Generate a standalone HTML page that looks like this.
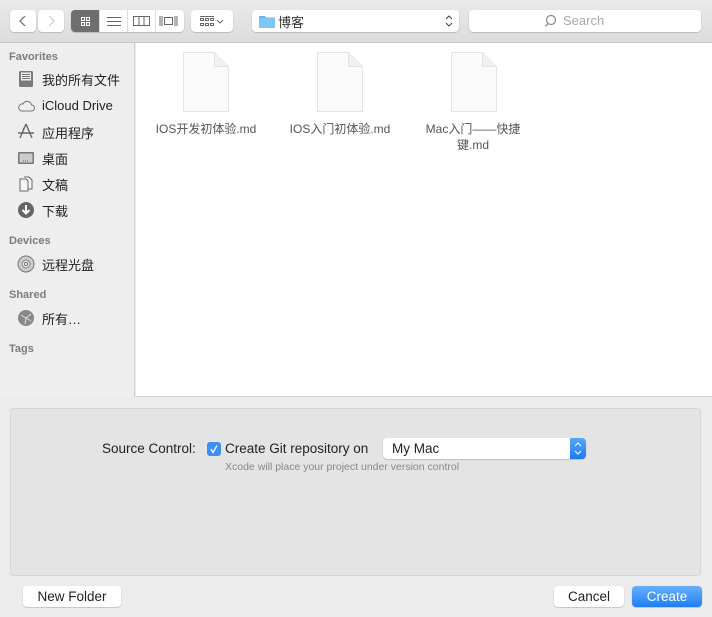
<!DOCTYPE html>
<html><head><meta charset="utf-8"><style>
*{box-sizing:border-box;margin:0;padding:0}
body{width:712px;height:617px;overflow:hidden;background:#ececec;font-family:"Liberation Sans","Noto Sans CJK SC",sans-serif;position:relative;font-size:13px;color:#222}
.abs{position:absolute}
.tb{left:0;top:0;width:712px;height:43px;background:linear-gradient(#eaeaea,#dcdcdc);border-bottom:1px solid #c8c8c8}
.btn{position:absolute;background:#fff;border-radius:4px;box-shadow:0 0.5px 1px rgba(0,0,0,.3);}
.side{left:0;top:43px;width:135px;height:354px;background:#eeeeee;border-right:1px solid #d0d0d0}
.main{left:136px;top:43px;width:576px;height:354px;background:#fff;border-bottom:1px solid #d4d4d4}
.hd{position:absolute;left:9px;font-size:11px;font-weight:bold;color:#7c7c7c}
.it{position:absolute;left:42px;font-size:13px;color:#222}
.ic{position:absolute;left:17px;width:18px;height:18px}
.file{position:absolute;width:46px;height:60px}
.fn{position:absolute;width:134px;text-align:center;font-size:12px;color:#555;line-height:16px}
</style></head><body>
<div class="abs tb"></div>
<div class="btn" style="left:10px;top:10px;width:26px;height:22px"><svg width="26" height="22"><path d="M15 6 L10 11 L15 16" stroke="#666" fill="none" stroke-width="1.2"/></svg></div>
<div class="btn" style="left:38px;top:10px;width:26px;height:22px"><svg width="26" height="22"><path d="M11 6 L16 11 L11 16" stroke="#ccc" fill="none" stroke-width="1.2"/></svg></div>
<div class="btn" style="left:71px;top:10px;width:113px;height:22px;overflow:hidden">
<div class="abs" style="left:0;top:0;width:28px;height:22px;background:#6e6e6e"></div>
<svg class="abs" style="left:0;top:0" width="113" height="22">
<g fill="none" stroke="#fff" stroke-width="1"><rect x="10.5" y="7.5" width="3" height="3"/><rect x="15.5" y="7.5" width="3" height="3"/><rect x="10.5" y="12.5" width="3" height="3"/><rect x="15.5" y="12.5" width="3" height="3"/></g>
<g stroke="#666" stroke-width="1"><path d="M36 7.5h14M36 11.5h14M36 15.5h14"/><line x1="28.5" y1="0" x2="28.5" y2="22" stroke="#ddd"/><line x1="56.5" y1="0" x2="56.5" y2="22" stroke="#ddd"/><line x1="84.5" y1="0" x2="84.5" y2="22" stroke="#ddd"/>
<rect x="62.5" y="6.5" width="16" height="9" fill="none"/><path d="M68 7v9M73 7v9"/>
<path d="M89 6v10M91 6v10M104 6v10M106 6v10" /><rect x="93.5" y="7.5" width="8" height="7" fill="none"/></g></svg></div>
<div class="btn" style="left:191px;top:10px;width:42px;height:22px"><svg width="42" height="22"><g fill="none" stroke="#666" stroke-width="1"><path d="M9 6.5h14"/><rect x="9.5" y="8.5" width="3" height="2"/><rect x="14.5" y="8.5" width="3" height="2"/><rect x="19.5" y="8.5" width="3" height="2"/><rect x="9.5" y="13.5" width="3" height="2"/><rect x="14.5" y="13.5" width="3" height="2"/><rect x="19.5" y="13.5" width="3" height="2"/><path d="M26 10l3 3 3-3"/></g></svg></div>
<div class="btn" style="left:252px;top:10px;width:207px;height:22px">
<svg class="abs" style="left:7px;top:4px" width="16" height="14"><path d="M0 2h6l1 1.5h9V14H0z" fill="#5eb6ec"/><rect x="0" y="4" width="16" height="10" fill="#7cc7f3"/></svg>
<span class="abs" style="left:26px;top:2px;font-size:13px;color:#333">博客</span>
<svg class="abs" style="left:193px;top:4px" width="8" height="14"><path d="M1 5l3-3 3 3M1 9l3 3 3-3" stroke="#444" fill="none"/></svg></div>
<div class="btn" style="left:469px;top:10px;width:232px;height:22px">
<svg class="abs" style="left:76px;top:4px" width="14" height="14"><circle cx="6" cy="6" r="4.5" stroke="#888" fill="none" stroke-width="1.2"/><path d="M3 9.5L0.5 12.5" stroke="#888" stroke-width="1.3"/></svg>
<span class="abs" style="left:94px;top:3px;color:#aaa;font-size:13px">Search</span></div>

<div class="abs side"></div>
<div class="hd" style="top:51px">Favorites</div>
<svg class="ic" style="top:70px" viewBox="0 0 18 18"><rect x="2" y="1" width="14" height="16" rx="1.5" fill="#7a7a7a"/><rect x="4" y="2.5" width="10" height="8" fill="#eee"/><path d="M5 4.5h8M5 6.5h8M5 8.5h8" stroke="#777"/></svg>
<div class="it" style="top:70px">我的所有文件</div>
<svg class="ic" style="top:97px" viewBox="0 0 18 18"><path d="M4.5 14h10a3 3 0 0 0 0-6 4.5 4.5 0 0 0-8.5-1A3.5 3.5 0 0 0 4.5 14z" fill="none" stroke="#777"/></svg>
<div class="it" style="top:98px">iCloud Drive</div>
<svg class="ic" style="top:122px" viewBox="0 0 18 18"><path d="M9 2L3 16M9 2l6 14M1 11h16M6 8l1-2" stroke="#666" fill="none" stroke-width="1.4"/></svg>
<div class="it" style="top:123px">应用程序</div>
<svg class="ic" style="top:149px" viewBox="0 0 18 18"><rect x="1" y="3" width="16" height="12" rx="1" fill="#777"/><rect x="2.5" y="4.5" width="13" height="9" fill="#ccc"/><path d="M6 12h6" stroke="#666" stroke-dasharray="1 1"/></svg>
<div class="it" style="top:149px">桌面</div>
<svg class="ic" style="top:175px" viewBox="0 0 18 18"><path d="M3 4h6l2 2v10H3z M7 2h5l3 3v9h-4" fill="#f5f5f5" stroke="#666"/></svg>
<div class="it" style="top:175px">文稿</div>
<svg class="ic" style="top:201px" viewBox="0 0 18 18"><circle cx="9" cy="9" r="8" fill="#666"/><path d="M9 4v8M5.5 9L9 12.5 12.5 9" stroke="#fff" stroke-width="2" fill="none"/></svg>
<div class="it" style="top:201px">下载</div>
<div class="hd" style="top:235px">Devices</div>
<svg class="ic" style="top:255px" viewBox="0 0 18 18"><circle cx="9" cy="9" r="8" fill="#ccc" stroke="#777"/><circle cx="9" cy="9" r="4" fill="#ddd" stroke="#888"/><circle cx="9" cy="9" r="1.5" fill="#fff" stroke="#777"/></svg>
<div class="it" style="top:255px">远程光盘</div>
<div class="hd" style="top:289px">Shared</div>
<svg class="ic" style="top:309px" viewBox="0 0 18 18"><circle cx="9" cy="9" r="8" fill="#888"/><path d="M4 6l5 3 5-4M9 9l-1 6M9 9l5 3" stroke="#ddd" fill="none"/></svg>
<div class="it" style="top:309px">所有…</div>
<div class="hd" style="top:343px">Tags</div>

<div class="abs main"></div>
<svg class="file" style="left:183px;top:52px" viewBox="0 0 46 60"><path d="M0.5 0.5h31l14 14v45h-45z" fill="#fafafa" stroke="#e4e4e4"/><path d="M31.5 0.5v14h14" fill="#f0f0f0" stroke="#e4e4e4"/></svg>
<svg class="file" style="left:317px;top:52px" viewBox="0 0 46 60"><path d="M0.5 0.5h31l14 14v45h-45z" fill="#fafafa" stroke="#e4e4e4"/><path d="M31.5 0.5v14h14" fill="#f0f0f0" stroke="#e4e4e4"/></svg>
<svg class="file" style="left:451px;top:52px" viewBox="0 0 46 60"><path d="M0.5 0.5h31l14 14v45h-45z" fill="#fafafa" stroke="#e4e4e4"/><path d="M31.5 0.5v14h14" fill="#f0f0f0" stroke="#e4e4e4"/></svg>
<div class="fn" style="left:139px;top:121px">IOS开发初体验.md</div>
<div class="fn" style="left:273px;top:121px">IOS入门初体验.md</div>
<div class="fn" style="left:407px;top:121px;width:132px;padding:0 14px">Mac入门——快捷键.md</div>

<div class="abs" style="left:10px;top:408px;width:691px;height:168px;background:#e4e4e4;border:1px solid #d6d6d6;border-radius:3px"></div>
<div class="abs" style="left:102px;top:441px;font-size:13.5px">Source Control:</div>
<div class="abs" style="left:207px;top:442px;width:14px;height:14px;background:#3d8ff4;border-radius:3px"><svg width="14" height="14"><path d="M4 7l2 3.5 4-7" stroke="#fff" fill="none" stroke-width="1.3"/></svg></div>
<div class="abs" style="left:225px;top:441px;font-size:13.5px">Create Git repository on</div>
<div class="btn" style="left:383px;top:438px;width:203px;height:21px;border-radius:4px;overflow:hidden">
<span class="abs" style="left:9px;top:3px;font-size:13.5px">My Mac</span>
<div class="abs" style="right:0;top:0;width:16px;height:21px;background:linear-gradient(#5aa6f8,#1f79f0)"><svg width="16" height="21"><path d="M5 8l3-3 3 3M5 13l3 3 3-3" stroke="#fff" fill="none"/></svg></div></div>
<div class="abs" style="left:225px;top:461px;font-size:10.5px;color:#888">Xcode will place your project under version control</div>
<div class="btn" style="left:23px;top:586px;width:98px;height:21px;text-align:center;line-height:21px;font-size:13.5px">New Folder</div>
<div class="btn" style="left:554px;top:586px;width:70px;height:21px;text-align:center;line-height:21px;font-size:13.5px">Cancel</div>
<div class="btn" style="left:632px;top:586px;width:70px;height:21px;text-align:center;line-height:21px;font-size:13.5px;color:#fff;background:linear-gradient(#67b0fb,#1e7df4)">Create</div>
</body></html>
